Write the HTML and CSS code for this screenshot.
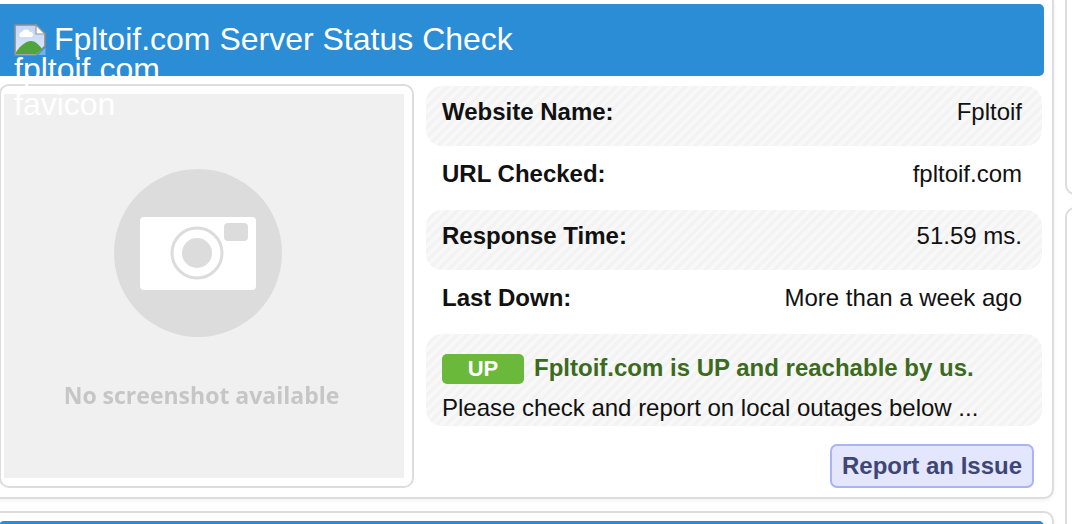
FILE: index.html
```html
<!DOCTYPE html>
<html lang="en">
<head>
<meta charset="utf-8">
<title>Fpltoif.com Server Status Check</title>
<link rel="stylesheet" href="styles.css">
</head>
<body>
<div class="layout">
  <main class="main-column">
    <section class="card">
      <h1 class="title-bar">
        <span class="favicon">
          <svg class="favicon-icon" viewBox="0 0 32 32" width="32" height="32" aria-hidden="true">
            <defs>
              <linearGradient id="sky" x1="0" y1="0" x2="0" y2="1">
                <stop offset="0" stop-color="#c3d6f6"/>
                <stop offset="1" stop-color="#dfe8fa"/>
              </linearGradient>
            </defs>
            <path d="M1 1H22L31 10V22L22 31H1Z" fill="url(#sky)" stroke="#8d8d8d" stroke-width="1.6"/>
            <path d="M22 1V10H31Z" fill="#fff" stroke="#9a9a9a" stroke-width="1.2"/>
            <path d="M6 13a3 3 0 0 1 2-5 4.500 4.500 0 0 1 8 0 2.500 2.500 0 0 1 1 5Z" fill="#fff"/>
            <path d="M2 30V28C7 21 12 17 17 17C22 17 26 22 28 25L22 30Z" fill="#4fa53b"/>
            <path d="M24 31L31.500 23.500V31Z" fill="#6fb4e6"/>
          </svg>
          <span class="favicon-alt">fpltoif.com favicon</span>
        </span>
        <span class="title-text">Fpltoif.com Server Status Check</span>
      </h1>
      <div class="card-body">
        <div class="shot-frame">
          <div class="shot">
            <svg class="shot-icon" viewBox="0 0 168 168" width="168" height="168" aria-hidden="true">
              <circle cx="84" cy="84" r="84" fill="#dcdcdc"/>
              <rect x="26" y="48" width="116" height="73" rx="4" fill="#fff"/>
              <rect x="110" y="54" width="24" height="18" rx="4" fill="#dcdcdc"/>
              <circle cx="83" cy="84" r="25" fill="none" stroke="#dcdcdc" stroke-width="3"/>
              <circle cx="83" cy="84" r="15" fill="#dcdcdc"/>
            </svg>
            <p class="shot-text">No screenshot available</p>
          </div>
        </div>
        <div class="details">
          <div class="row striped"><strong>Website Name:</strong><span>Fpltoif</span></div>
          <div class="row"><strong>URL Checked:</strong><span>fpltoif.com</span></div>
          <div class="row striped"><strong>Response Time:</strong><span>51.59 ms.</span></div>
          <div class="row"><strong>Last Down:</strong><span>More than a week ago</span></div>
          <div class="status striped">
            <div class="status-line"><span class="badge">UP</span><strong class="status-text">Fpltoif.com is UP and reachable by us.</strong></div>
            <p class="status-note">Please check and report on local outages below ...</p>
          </div>
          <div class="actions"><button class="report" type="button">Report an Issue</button></div>
        </div>
      </div>
    </section>
    <section class="card next-card"><div class="next-bar"></div></section>
  </main>
  <aside class="side-column">
    <div class="side-card first"></div>
    <div class="side-card second"></div>
  </aside>
</div>
</body>
</html>
```
FILE: styles.css
```css
* { box-sizing: border-box; }
html, body { margin: 0; height: 524px; overflow: hidden; background: #fff; }
body { font-family: "Liberation Sans", Arial, sans-serif; color: #111; }

.layout { display: flex; gap: 11px; margin: -8px 0 0 -10px; width: 1200px; }
.main-column { width: 1064px; flex: none; display: flex; flex-direction: column; gap: 12px; }
.side-column { width: 200px; flex: none; display: flex; flex-direction: column; gap: 12px; }

.card { background: #fff; border: 2px solid #ddd; border-radius: 10px; padding: 10px 8px 9px 7px; box-shadow: 0 2px 4px rgba(0, 0, 0, 0.05); }
.next-card { height: 80px; padding-top: 8px; }
.next-bar { height: 40px; background: #2a8dd6; border-radius: 5px 5px 0 0; }

.title-bar { display: flex; align-items: center; gap: 8px; height: 72px; margin: 0; padding: 0 0 0 15px; background: #2a8dd6; color: #fff; font-size: 32px; font-weight: 400; border-radius: 0 5px 5px 0; }
.title-text { margin-top: -2px; }
.favicon { position: relative; display: block; width: 32px; height: 32px; flex: none; }
.favicon-icon { display: block; }
.favicon-alt { position: absolute; left: 0; top: 28px; width: 160px; line-height: 35px; color: #fff; }

.card-body { display: flex; gap: 12px; margin-top: 8px; }
.shot-frame { width: 415px; height: 404px; flex: none; border: 2px solid #ddd; border-radius: 10px; padding: 8px 8px 8px 3px; }
.shot { height: 384px; background: #f0f0f0; display: flex; flex-direction: column; align-items: center; padding-top: 75px; }
.shot-icon { display: block; filter: blur(0.5px); margin-left: -13px; }
.shot-text { margin: 45px 0 0 -5px; font-family: "Open Sans", sans-serif; font-weight: 700; font-size: 23px; line-height: 26px; color: #c6c6c6; filter: blur(0.4px); white-space: nowrap; }

.details { width: 616px; flex: none; display: flex; flex-direction: column; gap: 2px; padding-top: 2px; font-size: 24px; }
.row { height: 60px; display: flex; justify-content: space-between; align-items: center; padding: 0 20px 8px 16px; border-radius: 16px; }
.striped { background: repeating-linear-gradient(135deg, #f3f3f3 0, #f3f3f3 3.5px, #f8f8f8 3.5px, #f8f8f8 7px); }
.status { height: 92px; padding: 20px 16px 0; border-radius: 16px; }
.status-line { display: flex; align-items: center; gap: 10px; height: 30px; }
.badge { width: 82px; height: 30px; display: flex; align-items: center; justify-content: center; background: #6ab93a; color: #fff; font-size: 22px; font-weight: 700; border-radius: 5px; }
.status-text { color: #3c6a1e; margin-top: -2px; }
.status-note { margin: 10px 0 0; line-height: 28px; }
.actions { display: flex; justify-content: flex-end; padding: 16px 8px 0 0; }
.report { width: 204px; height: 44px; padding: 0; background: #e3e6fd; border: 2px solid #a9b4f8; border-radius: 7px; color: #3d4677; font: 700 24px "Liberation Sans", Arial, sans-serif; }

.side-card { border: 2px solid #ddd; border-radius: 10px; background: #fff; }
.side-card.first { height: 203px; }
.side-card.second { height: 340px; }
```
